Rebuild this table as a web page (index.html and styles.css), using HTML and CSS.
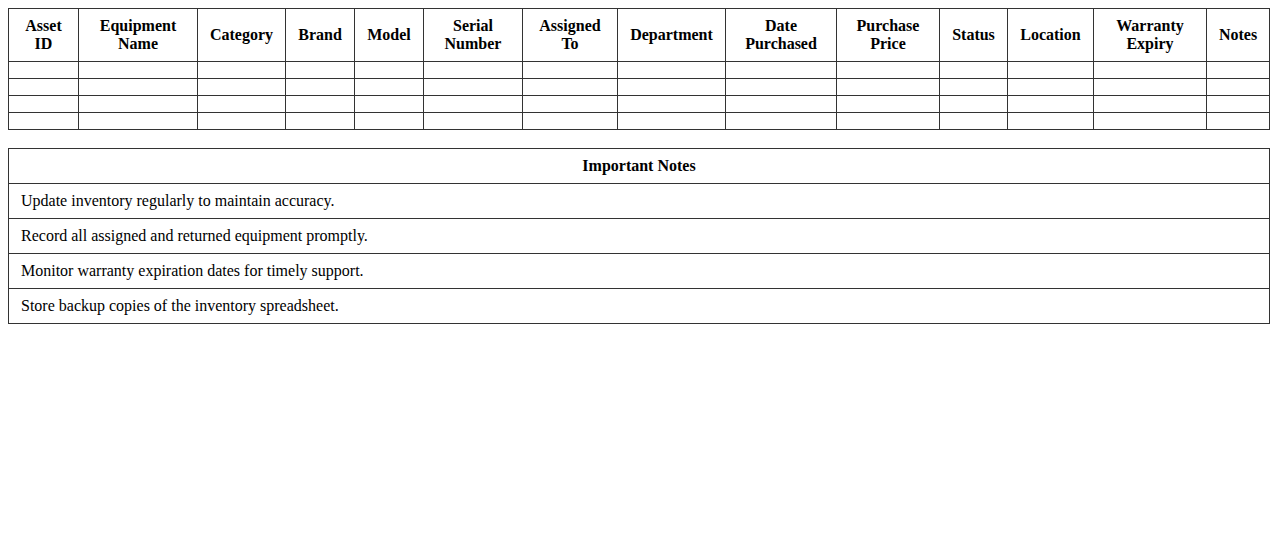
FILE: index.html
```html
<!DOCTYPE html>
<html>
<head>
<meta charset="utf-8">
<link rel="stylesheet" href="styles.css">
</head>
<body>
<table class="inventory">
  <colgroup>
    <col class="c-id">
    <col class="c-name">
    <col class="c-cat">
    <col class="c-brand">
    <col class="c-model">
    <col class="c-serial">
    <col class="c-assigned">
    <col class="c-dept">
    <col class="c-date">
    <col class="c-price">
    <col class="c-status">
    <col class="c-loc">
    <col class="c-warranty">
    <col class="c-notes">
  </colgroup>
  <thead>
    <tr>
      <th>Asset ID</th>
      <th>Equipment Name</th>
      <th>Category</th>
      <th>Brand</th>
      <th>Model</th>
      <th>Serial Number</th>
      <th>Assigned To</th>
      <th>Department</th>
      <th>Date Purchased</th>
      <th>Purchase Price</th>
      <th>Status</th>
      <th>Location</th>
      <th>Warranty Expiry</th>
      <th>Notes</th>
    </tr>
  </thead>
  <tbody>
    <tr><td></td><td></td><td></td><td></td><td></td><td></td><td></td><td></td><td></td><td></td><td></td><td></td><td></td><td></td></tr>
    <tr><td></td><td></td><td></td><td></td><td></td><td></td><td></td><td></td><td></td><td></td><td></td><td></td><td></td><td></td></tr>
    <tr><td></td><td></td><td></td><td></td><td></td><td></td><td></td><td></td><td></td><td></td><td></td><td></td><td></td><td></td></tr>
    <tr><td></td><td></td><td></td><td></td><td></td><td></td><td></td><td></td><td></td><td></td><td></td><td></td><td></td><td></td></tr>
  </tbody>
</table>

<table class="notes">
  <thead>
    <tr><th>Important Notes</th></tr>
  </thead>
  <tbody>
    <tr><td>Update inventory regularly to maintain accuracy.</td></tr>
    <tr><td>Record all assigned and returned equipment promptly.</td></tr>
    <tr><td>Monitor warranty expiration dates for timely support.</td></tr>
    <tr><td>Store backup copies of the inventory spreadsheet.</td></tr>
  </tbody>
</table>
</body>
</html>
```

FILE: styles.css
```css
body {
  margin: 8px;
  font-family: "Liberation Serif", "Times New Roman", serif;
  font-size: 16px;
  color: #000;
  background: #fff;
}

table {
  width: 100%;
  border-collapse: collapse;
}

th, td {
  border: 1px solid #333;
}

.inventory {
  table-layout: fixed;
}

.c-id { width: 70px; }
.c-name { width: 119px; }
.c-cat { width: 88px; }
.c-brand { width: 69px; }
.c-model { width: 69px; }
.c-serial { width: 99px; }
.c-assigned { width: 95px; }
.c-dept { width: 108px; }
.c-date { width: 111px; }
.c-price { width: 103px; }
.c-status { width: 68px; }
.c-loc { width: 86px; }
.c-warranty { width: 113px; }
.c-notes { width: auto; }

.inventory th {
  padding: 8px;
  text-align: center;
  font-weight: bold;
}

.inventory td {
  padding: 8px;
}

.notes {
  margin-top: 18px;
}

.notes th {
  padding: 8px 12px;
  text-align: center;
  font-weight: bold;
}

.notes td {
  padding: 8px 12px;
  text-align: left;
}
```
